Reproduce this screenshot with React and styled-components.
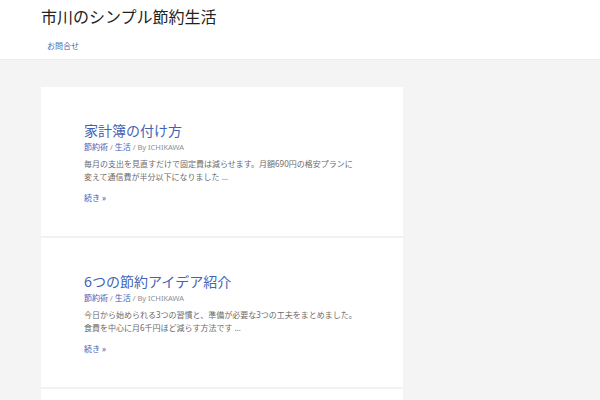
import React from "react";
import styled, { createGlobalStyle } from "styled-components";

const posts = [
  {
    title: "家計簿の付け方",
    cats: ["節約術", "生活"],
    author: "ICHIKAWA",
    excerpt:
      "毎月の支出を見直すだけで固定費は減らせます。月額690円の格安プランに変えて通信費が半分以下になりました",
  },
  {
    title: "6つの節約アイデア紹介",
    cats: ["節約術", "生活"],
    author: "ICHIKAWA",
    excerpt:
      "今日から始められる3つの習慣と、準備が必要な3つの工夫をまとめました。食費を中心に月6千円ほど減らす方法です",
  },
];

function App() {
  return (
    <>
      <GlobalStyle />
      <Header>
        <SiteTitle>市川のシンプル節約生活</SiteTitle>
        <Nav>
          <NavLink href="#">お問合せ</NavLink>
        </Nav>
      </Header>
      <Main>
        <Content>
          {posts.map((post, i) => (
            <Article key={i}>
              <PostTitle href="#">{post.title}</PostTitle>
              <Meta>
                <MetaLink href="#">{post.cats[0]}</MetaLink> /{" "}
                <MetaLink href="#">{post.cats[1]}</MetaLink> / By{" "}
                {post.author}
              </Meta>
              <Excerpt>{post.excerpt} …</Excerpt>
              <ReadMore href="#">続き »</ReadMore>
            </Article>
          ))}
          <Article />
        </Content>
      </Main>
    </>
  );
}

export default App;

const GlobalStyle = createGlobalStyle`
  html, body {
    margin: 0;
    padding: 0;
    background: #f4f4f4;
    font-family: "Noto Sans", "Noto Sans CJK JP", sans-serif;
  }
`;

const Header = styled.header`
  background: #fff;
  height: 60px;
  padding-left: 41px;
  border-bottom: 1px solid #ececec;
  box-sizing: border-box;
`;

const SiteTitle = styled.div`
  padding-top: 6px;
  font-size: 16px;
  line-height: 20px;
  color: #222;
  font-family: "Noto Sans CJK JP", sans-serif;
`;

const Nav = styled.nav`
  display: flex;
  margin-top: 14px;
  padding-left: 6px;
`;

const NavLink = styled.a`
  font-size: 8px;
  line-height: 12px;
  color: #3f63b5;
  text-decoration: none;
  font-family: "Noto Sans CJK JP", sans-serif;
`;

const Main = styled.main`
  display: flex;
  padding: 27px 0 0 41px;
`;

const Content = styled.div`
  width: 362px;
  background: #fff;
  display: flex;
  flex-direction: column;
`;

const Article = styled.article`
  display: flex;
  flex-direction: column;
  align-items: flex-start;
  padding: 34px 43px 32px;
  border-bottom: 2px solid #f2f2f2;
`;

const PostTitle = styled.a`
  font-size: 14px;
  line-height: 19px;
  color: #3f63b5;
  text-decoration: none;
`;

const Meta = styled.div`
  margin-top: 1px;
  font-size: 7.5px;
  line-height: 12px;
  color: #8a8f99;
`;

const MetaLink = styled.a`
  color: #3f63b5;
  text-decoration: none;
  font-size: 8px;
`;

const Excerpt = styled.p`
  margin: 4px 0 0;
  font-size: 8px;
  line-height: 13px;
  color: #6b6b6b;
`;

const ReadMore = styled.a`
  margin-top: 8px;
  font-size: 8px;
  line-height: 13px;
  color: #3f63b5;
  text-decoration: none;
`;
